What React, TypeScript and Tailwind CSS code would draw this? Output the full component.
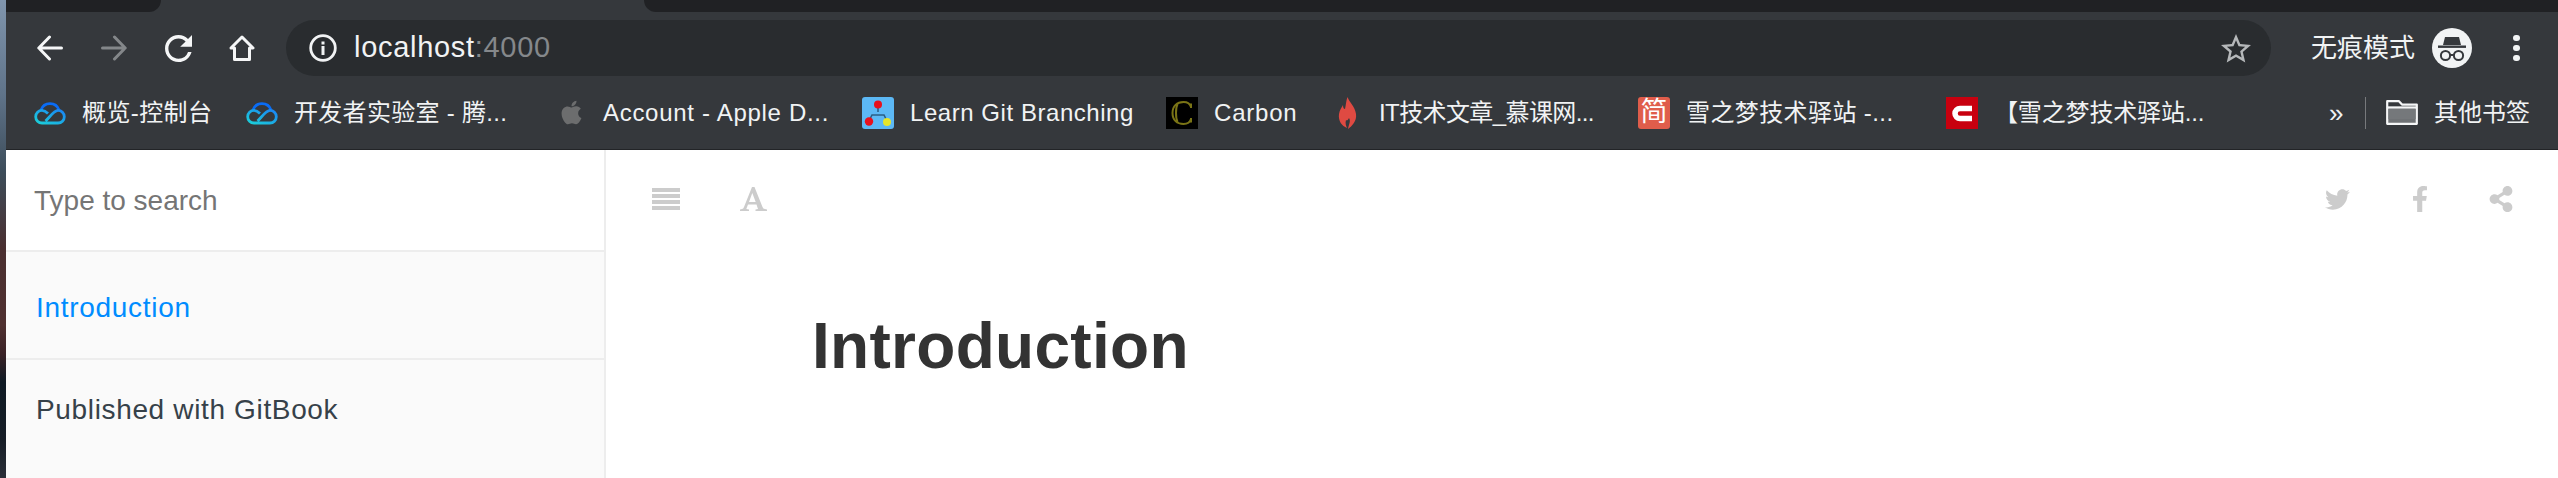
import React from "react";
import { FaApple, FaTwitter, FaFacebookF, FaShareAlt } from "react-icons/fa";

function Bookmark({ width, icon, text, tracking }: { width: string; icon: React.ReactNode; text: string; tracking: string }) {
  return (
    <div className={`flex items-center gap-4 shrink-0 ${width}`}>
      <div className="flex h-8 w-8 shrink-0 items-center justify-center">{icon}</div>
      <span className={`whitespace-nowrap text-[24px] text-[#f1f3f4] ${tracking}`}>{text}</span>
    </div>
  );
}

const Cloud = ({ id }: { id: string }) => (
  <svg width="32" height="24" viewBox="0 0 32 24" fill="none" strokeWidth="2.8">
    <defs>
      <linearGradient id={id} x1="0" y1="1" x2="1" y2="0">
        <stop offset="0" stopColor="#1bd0d8" />
        <stop offset="1" stopColor="#1a84f5" />
      </linearGradient>
    </defs>
    <path d="M7 9 A9.5 9.5 0 0 1 25 9" stroke="#0a6cf5" />
    <path d="M14 12.5 C12 10.5 10 9.4 8 9.4 A6.2 6.2 0 0 0 8 22 H24 A6.2 6.2 0 0 0 24 9.4 C20 9.4 15 17 11.5 20" stroke={`url(#${id})`} />
  </svg>
);

const GitIcon = () => (
  <svg width="32" height="32" viewBox="0 0 32 32">
    <rect width="32" height="32" rx="3" fill="#5cb8f5" />
    <path d="M16 8 V15 M7 24 L10 18 H22 L25 24" stroke="#2b5f86" strokeWidth="1.6" fill="none" />
    <circle cx="16" cy="7.5" r="4" fill="#e8101c" />
    <circle cx="7" cy="24.5" r="4.2" fill="#e8101c" />
    <circle cx="25" cy="25" r="4" fill="#e6e62a" />
  </svg>
);

const CarbonIcon = () => (
  <svg width="32" height="32" viewBox="0 0 32 32" fill="none">
    <rect width="32" height="32" fill="#000" />
    <path d="M25 10 C24 6.5 21 5 17.5 5 C11 5 6.5 9 6.5 16 C6.5 23 11 27 17.5 27 C21 27 24 25.5 25 22" stroke="#7a7416" strokeWidth="2" />
    <path d="M11.5 7 C9.5 11 9.5 21 11.5 25" stroke="#7a7416" strokeWidth="2" />
    <path d="M25 6.5 V11 M25 21 V25.5" stroke="#7a7416" strokeWidth="2" />
  </svg>
);

const Flame = () => (
  <svg width="19" height="32" viewBox="0 0 19 32">
    <path d="M9.5 0 C11 5 17 9 18 17 C19 24 14 29 10 32 C11 27 13 24 11 21 C10 23 9 24 8 23 C7 26 8 29 9 31 C4 29 0 24 1 17 C1.5 13 4 10 5 8 C5 11 6 12 7 12 C8 8 8 4 9.5 0 Z" fill="#df4a42" />
  </svg>
);

const CsdnIcon = () => (
  <svg width="32" height="32" viewBox="0 0 32 32" fill="none">
    <rect width="32" height="32" fill="#c8000f" />
    <path d="M26 11.5 H14 A5 5 0 0 0 14 21.5 H26" stroke="#fff" strokeWidth="5.5" />
  </svg>
);

export default function App() {
  return (
    <div className="flex h-[478px] w-full overflow-hidden bg-white font-['Liberation_Sans','Noto_Sans_CJK_SC',sans-serif]">
      <div className="w-[6px] shrink-0 bg-[linear-gradient(180deg,#8095ad_0%,#5f7389_20%,#3d4d5a_36%,#4a2f30_52%,#4f3030_68%,#3a2226_74%,#0f1a24_80%,#161d26_92%,#2a2e38_100%)]" />
      <div className="flex min-w-0 flex-1 flex-col">
        {/* tab strip */}
        <div className="flex h-3 shrink-0 bg-[#35383c]">
          <div className="w-[155px] rounded-br-[14px] bg-[#202124]" />
          <div className="w-[483px]" />
          <div className="flex-1 rounded-bl-[14px] bg-[#202124]" />
        </div>

        {/* navigation row */}
        <div className="flex h-[64px] shrink-0 items-center bg-[#35383c] pl-[31px] pt-2">
          <svg width="26" height="26" viewBox="0 0 26 26" fill="none" stroke="#f5f6f7" strokeWidth="3" strokeLinecap="round" strokeLinejoin="round">
            <path d="M24.5 13 H2 M12.5 2 L1.8 13 L12.5 24" />
          </svg>
          <svg className="ml-[38px]" width="26" height="26" viewBox="0 0 26 26" fill="none" stroke="#84878a" strokeWidth="3" strokeLinecap="round" strokeLinejoin="round">
            <path d="M1.5 13 H24 M13.5 2 L24.2 13 L13.5 24" />
          </svg>
          <svg className="ml-[38px]" width="27" height="27" viewBox="4 4 16 16" fill="#f5f6f7">
            <path d="M17.65 6.35A7.958 7.958 0 0 0 12 4c-4.42 0-7.99 3.58-7.99 8s3.57 8 7.99 8c3.73 0 6.84-2.55 7.73-6h-2.08A5.99 5.99 0 0 1 12 18c-3.31 0-6-2.69-6-6s2.69-6 6-6c1.66 0 3.14.69 4.22 1.78L13 11h7V4l-2.35 2.35z" />
          </svg>
          <svg className="ml-[37px]" width="26" height="26" viewBox="0 0 26 26" fill="none" stroke="#f5f6f7" strokeWidth="3" strokeLinejoin="round">
            <path d="M13 2 L24 13 H20.5 V24.5 H5.5 V13 H2 Z" />
          </svg>

          <div className="ml-[31px] flex h-[56px] w-[1985px] shrink-0 items-center rounded-[28px] bg-[#292c2f] pl-[23px] pr-5">
            <svg width="28" height="28" viewBox="0 0 28 28" fill="none">
              <circle cx="14" cy="14" r="12.3" stroke="#f1f3f4" strokeWidth="2.8" />
              <rect x="12.5" y="12" width="3" height="9" fill="#f1f3f4" />
              <rect x="12.5" y="7.5" width="3" height="3" fill="#f1f3f4" />
            </svg>
            <div className="ml-[17px] text-[29px] tracking-[0.7px]">
              <span className="text-[#f1f3f4]">localhost</span>
              <span className="text-[#85888b]">:4000</span>
            </div>
            <svg className="ml-auto" width="30" height="29" viewBox="2 2 20 19.3" fill="#b5b8ba">
              <path d="M22 9.24l-7.19-.62L12 2 9.19 8.63 2 9.24l5.46 4.73L5.82 21 12 17.27 18.18 21l-1.63-7.03L22 9.24zM12 15.4l-3.76 2.27 1-4.28-3.32-2.88 4.38-.38L12 6.1l1.71 4.04 4.38.38-3.32 2.88 1 4.28L12 15.4z" />
            </svg>
          </div>

          <span className="ml-[40px] whitespace-nowrap text-[26px] text-[#f1f3f4]">无痕模式</span>
          <div className="ml-[17px] flex h-10 w-10 shrink-0 items-center justify-center rounded-full bg-[#f1f3f4]">
            <svg width="30" height="27" viewBox="0 0 30 27" fill="none">
              <path d="M8 2 H22 L24 10 H6 Z" fill="#35383c" />
              <rect x="1" y="10.5" width="28" height="2.4" fill="#35383c" />
              <circle cx="8.5" cy="20.5" r="4.6" stroke="#35383c" strokeWidth="2" />
              <circle cx="21.5" cy="20.5" r="4.6" stroke="#35383c" strokeWidth="2" />
              <path d="M13 20 H17" stroke="#35383c" strokeWidth="2" />
            </svg>
          </div>
          <div className="ml-[41px] flex flex-col gap-[3.4px]">
            <span className="h-[6.6px] w-[6.6px] rounded-full bg-[#f1f3f4]" />
            <span className="h-[6.6px] w-[6.6px] rounded-full bg-[#f1f3f4]" />
            <span className="h-[6.6px] w-[6.6px] rounded-full bg-[#f1f3f4]" />
          </div>
        </div>

        {/* bookmarks row */}
        <div className="flex h-[74px] shrink-0 items-center border-b border-[#222427] bg-[#35383c] pl-[28px]">
          <Bookmark width="w-[212px]" tracking="tracking-[0.4px]" icon={<Cloud id="cloud-a" />} text="概览-控制台" />
          <Bookmark width="w-[309px]" tracking="tracking-[0.3px]" icon={<Cloud id="cloud-b" />} text="开发者实验室 - 腾..." />
          <Bookmark width="w-[307px]" tracking="tracking-[0.7px]" icon={<FaApple size={27} color="#6c6d6e" />} text="Account - Apple D..." />
          <Bookmark width="w-[304px]" tracking="tracking-[0.55px]" icon={<GitIcon />} text="Learn Git Branching" />
          <Bookmark width="w-[165px]" tracking="tracking-[0.8px]" icon={<CarbonIcon />} text="Carbon" />
          <Bookmark width="w-[307px]" tracking="tracking-[-0.6px]" icon={<Flame />} text="IT技术文章_慕课网..." />
          <Bookmark
            width="w-[308px]"
            tracking="tracking-[0.4px]"
            icon={
              <div className="flex h-8 w-8 items-center justify-center rounded-[3px] bg-[#e05d4b] text-[27px] leading-none text-white">简</div>
            }
            text="雪之梦技术驿站 -..."
          />
          <Bookmark width="w-[383px]" tracking="tracking-[-0.15px]" icon={<CsdnIcon />} text="【雪之梦技术驿站..." />
          <span className="w-[36px] shrink-0 text-[26px] leading-none text-[#f1f3f4]">»</span>
          <div className="h-8 w-px shrink-0 bg-[#77797c]" />
          <svg className="ml-[20px] shrink-0" width="32" height="25" viewBox="0 0 32 25" fill="none">
            <path d="M2 6 H30 V23.5 H2 Z" fill="#6f7275" />
            <path d="M1.2 23.8 V1.2 H13 L16 4.6 H30.8 V23.8 Z M1.2 7.6 H30.8" stroke="#f5f6f7" strokeWidth="2.2" strokeLinejoin="round" fill="none" />
            <path d="M2.4 8.7 H29.6 V19 H2.4 Z" fill="#75787b" />
          </svg>
          <span className="ml-[16px] whitespace-nowrap text-[24px] text-[#f1f3f4]">其他书签</span>
        </div>

        {/* page */}
        <div className="flex min-h-0 flex-1">
          <aside className="flex w-[600px] shrink-0 flex-col border-r-2 border-[#ededed] bg-[#fafafa]">
            <div className="flex h-[102px] shrink-0 items-center border-b-2 border-[#ededed] bg-white pl-[28px] pt-[2px] text-[28px] text-[#757575]">
              Type to search
            </div>
            <div className="flex h-[108px] shrink-0 items-center border-b-2 border-[#ededed] pl-[30px] pt-[6px] text-[28px] tracking-[0.7px] text-[#008cff]">
              Introduction
            </div>
            <div className="flex h-[100px] shrink-0 items-center pl-[30px] text-[28px] tracking-[0.65px] text-[#364149]">
              Published with GitBook
            </div>
          </aside>

          <main className="min-w-0 flex-1">
            <div className="flex h-[98px] items-center pl-[46px] pr-[44px]">
              <svg width="28" height="22" viewBox="0 0 28 22" fill="#cccccc">
                <rect y="0" width="28" height="4" />
                <rect y="6" width="28" height="4" />
                <rect y="12" width="28" height="4" />
                <rect y="18" width="28" height="4" />
              </svg>
              <svg className="ml-[60px]" width="27" height="24" viewBox="0 0 27 24" fill="#cccccc" fillRule="evenodd">
                <path d="M0 24 V22.6 L2 22 C3 22 3.5 21 4 20 L12 0 H14.5 L22.5 20 C23 21 23.5 22 25 22 L27 22.6 V24 H15.5 V22.6 L18 22 L16.5 17.5 H8 L6.3 22 L9 22.6 V24 Z M9 15 H15.7 L12.3 6 Z" />
              </svg>
              <FaTwitter className="ml-auto" size={25} color="#cccccc" />
              <FaFacebookF className="ml-[57px]" size={26} color="#cccccc" />
              <FaShareAlt className="ml-[55px]" size={26} color="#cccccc" />
            </div>
            <h1 className="mt-[66px] pl-[206px] text-[64px] font-bold leading-none tracking-[0.3px] text-[#333333]">Introduction</h1>
          </main>
        </div>
      </div>
    </div>
  );
}
